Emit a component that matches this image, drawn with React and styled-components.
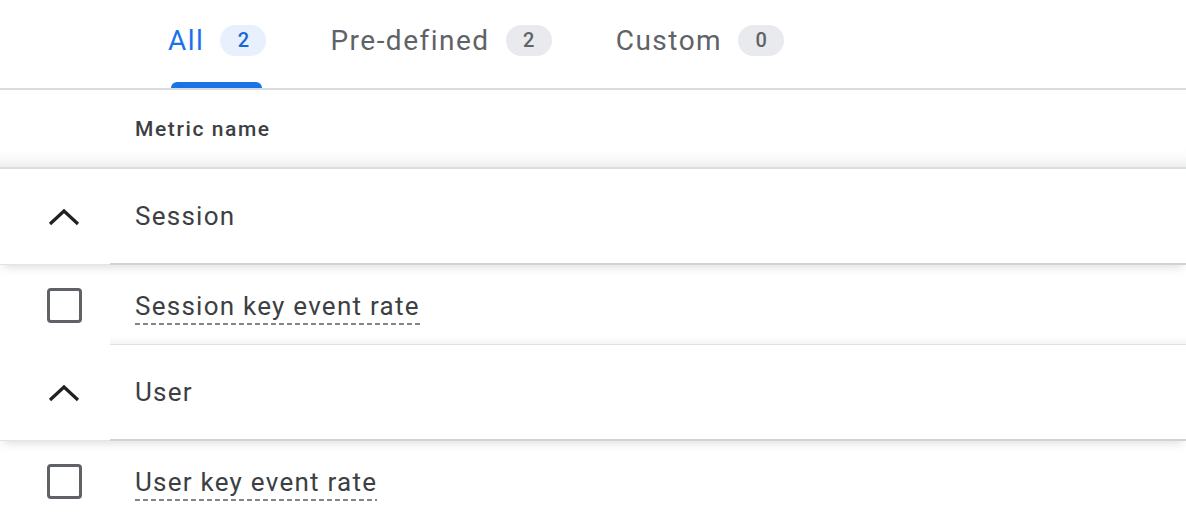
import React from 'react';
import styled, { createGlobalStyle } from 'styled-components';

const GlobalStyle = createGlobalStyle`
  html, body {
    margin: 0;
    padding: 0;
    background: #ffffff;
    font-family: Roboto, "Liberation Sans", Arial, sans-serif;
    color: #3c4043;
  }
`;

const Page = styled.div`
  width: 1186px;
  height: 532px;
  overflow: hidden;
  background: #fff;
`;

const TabBar = styled.div`
  display: flex;
  height: 88px;
  padding-left: 136px;
  border-bottom: 2px solid #dadce0;
`;

const Tab = styled.div`
  display: flex;
  flex-direction: column;
  justify-content: flex-end;
  padding: 0 32px;
`;

const TabInner = styled.div`
  display: flex;
  align-items: center;
  gap: 16px;
  height: 100%;
  padding-bottom: 8px;
  box-sizing: border-box;
  position: relative;
`;

const TabLabel = styled.span`
  font-size: 28px;
  letter-spacing: 1.5px;
  color: ${(p) => (p.$active ? '#1a73e8' : '#5f6368')};
`;

const Badge = styled.span`
  display: inline-flex;
  align-items: center;
  justify-content: center;
  width: 46px;
  height: 31px;
  border-radius: 16px;
  font-size: 20px;
  font-weight: 500;
  background: ${(p) => (p.$active ? '#e8f0fe' : '#e8eaed')};
  color: ${(p) => (p.$active ? '#1967d2' : '#5f6368')};
`;

const Indicator = styled.div`
  position: absolute;
  left: 3px;
  right: 4px;
  bottom: 0;
  height: 6px;
  border-radius: 6px 6px 0 0;
  background: #1a73e8;
`;

const HeaderRow = styled.div`
  display: flex;
  align-items: center;
  height: 77px;
  padding-left: 135px;
  border-bottom: 2px solid #dadce0;
  box-shadow: inset 0 -16px 14px -12px rgba(60, 64, 67, 0.12);
  font-size: 21px;
  font-weight: 500;
  letter-spacing: 1.6px;
  color: #3c4043;
`;

const Row = styled.div`
  display: grid;
  grid-template-columns: 110px 1fr;
  height: ${(p) => (p.$group ? '96px' : '80px')};
  position: relative;
  background: #fff;
  box-shadow: ${(p) =>
    p.$group ? '0 5px 9px -3px rgba(60, 64, 67, 0.18)' : 'none'};
  z-index: ${(p) => (p.$group ? 1 : 0)};
`;

const IconCell = styled.div`
  display: flex;
  align-items: center;
  justify-content: center;
  padding-left: 18px;
  box-sizing: border-box;
  border-bottom: ${(p) => (p.$group ? '1px solid #e3e4e6' : 'none')};
`;

const TextCell = styled.div`
  display: flex;
  align-items: center;
  padding-left: 25px;
  font-size: 26px;
  letter-spacing: 1.25px;
  color: #3c4043;
  border-bottom: ${(p) =>
    p.$group ? '2px solid #d0d3d6' : p.$last ? 'none' : '1px solid #dfe1e3'};
  box-shadow: ${(p) =>
    p.$group || p.$last ? 'none' : 'inset 0 -10px 10px -10px rgba(60, 64, 67, 0.12)'};
`;

const Checkbox = styled.span`
  width: 35px;
  height: 35px;
  box-sizing: border-box;
  border: 3.5px solid #5f6368;
  border-radius: 4px;
`;

const Dashed = styled.span`
  padding-bottom: 4px;
  margin-top: 6px;
  background-image: linear-gradient(to right, #80868b 60%, transparent 60%);
  background-size: 8px 2px;
  background-repeat: repeat-x;
  background-position: left bottom;
`;

const Chevron = () => (
  <svg width="34" height="20" viewBox="0 0 34 20">
    <path d="M3 17 L17 4 L31 17" fill="none" stroke="#202124" strokeWidth="3.2" />
  </svg>
);

const tabs = [
  { label: 'All', count: 2, active: true },
  { label: 'Pre-defined', count: 2 },
  { label: 'Custom', count: 0 },
];

const groups = [
  { name: 'Session', items: ['Session key event rate'] },
  { name: 'User', items: ['User key event rate'] },
];

export default function App() {
  return (
    <Page>
      <GlobalStyle />
      <TabBar>
        {tabs.map((t) => (
          <Tab key={t.label}>
            <TabInner>
              <TabLabel $active={t.active}>{t.label}</TabLabel>
              <Badge $active={t.active}>{t.count}</Badge>
              {t.active && <Indicator />}
            </TabInner>
          </Tab>
        ))}
      </TabBar>
      <HeaderRow>Metric name</HeaderRow>
      {groups.map((g, gi) => (
        <React.Fragment key={g.name}>
          <Row $group>
            <IconCell $group>
              <Chevron />
            </IconCell>
            <TextCell $group>{g.name}</TextCell>
          </Row>
          {g.items.map((it) => (
            <Row key={it}>
              <IconCell>
                <Checkbox />
              </IconCell>
              <TextCell $last={gi === groups.length - 1}>
                <Dashed>{it}</Dashed>
              </TextCell>
            </Row>
          ))}
        </React.Fragment>
      ))}
    </Page>
  );
}
